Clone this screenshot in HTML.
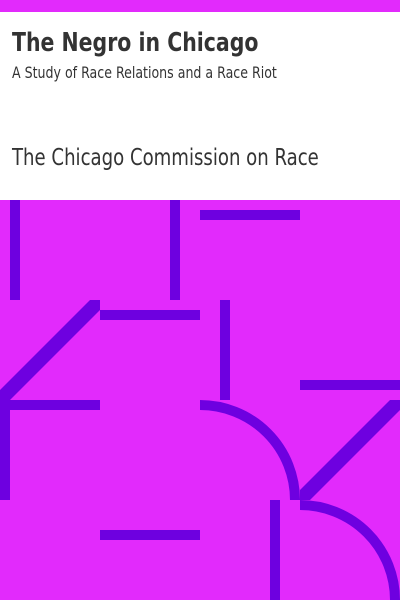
<!DOCTYPE html>
<html><head><style>
html,body{margin:0;padding:0;width:400px;height:600px;overflow:hidden;background:#e22afc}
.w{position:absolute;left:0;top:12px;width:400px;height:188px;background:#fff}
.t{position:absolute;left:12px;white-space:nowrap;color:#333;font-family:"DejaVu Sans Condensed","DejaVu Sans","Liberation Sans",sans-serif;font-stretch:condensed;transform:scaleX(0.875);transform-origin:0 0}
svg{position:absolute;left:0;top:0}
</style></head><body>
<div class="w"></div>
<div class="t" style="top:26px;font-size:26px;font-weight:bold;line-height:34px">The Negro in Chicago</div>
<div class="t" style="top:63px;font-size:16px;line-height:20px">A Study of Race Relations and a Race Riot</div>
<div class="t" style="top:143px;font-size:23px;line-height:30px">The Chicago Commission on Race</div>
<svg width="400" height="600" viewBox="0 0 400 600">
<g fill="#6e00e0">
<rect x="10" y="200" width="10" height="100"/>
<rect x="170" y="200" width="10" height="100"/>
<rect x="200" y="210" width="100" height="10"/>
<polygon points="90,300 100,300 100,310 10,400 0,400 0,390"/>
<rect x="100" y="310" width="100" height="10"/>
<rect x="220" y="300" width="10" height="100"/>
<rect x="300" y="380" width="100" height="10"/>
<rect x="0" y="400" width="100" height="10"/>
<rect x="0" y="400" width="10" height="100"/>
<polygon points="390,400 400,400 400,410 310,500 300,500 300,490"/>
<rect x="270" y="500" width="10" height="100"/>
<rect x="100" y="530" width="100" height="10"/>
</g>
<g fill="none" stroke="#6e00e0" stroke-width="10">
<path d="M200,405 A95,95 0 0 1 295,500"/>
<path d="M300,505 A95,95 0 0 1 395,600"/>
</g>
</svg>
</body></html>
